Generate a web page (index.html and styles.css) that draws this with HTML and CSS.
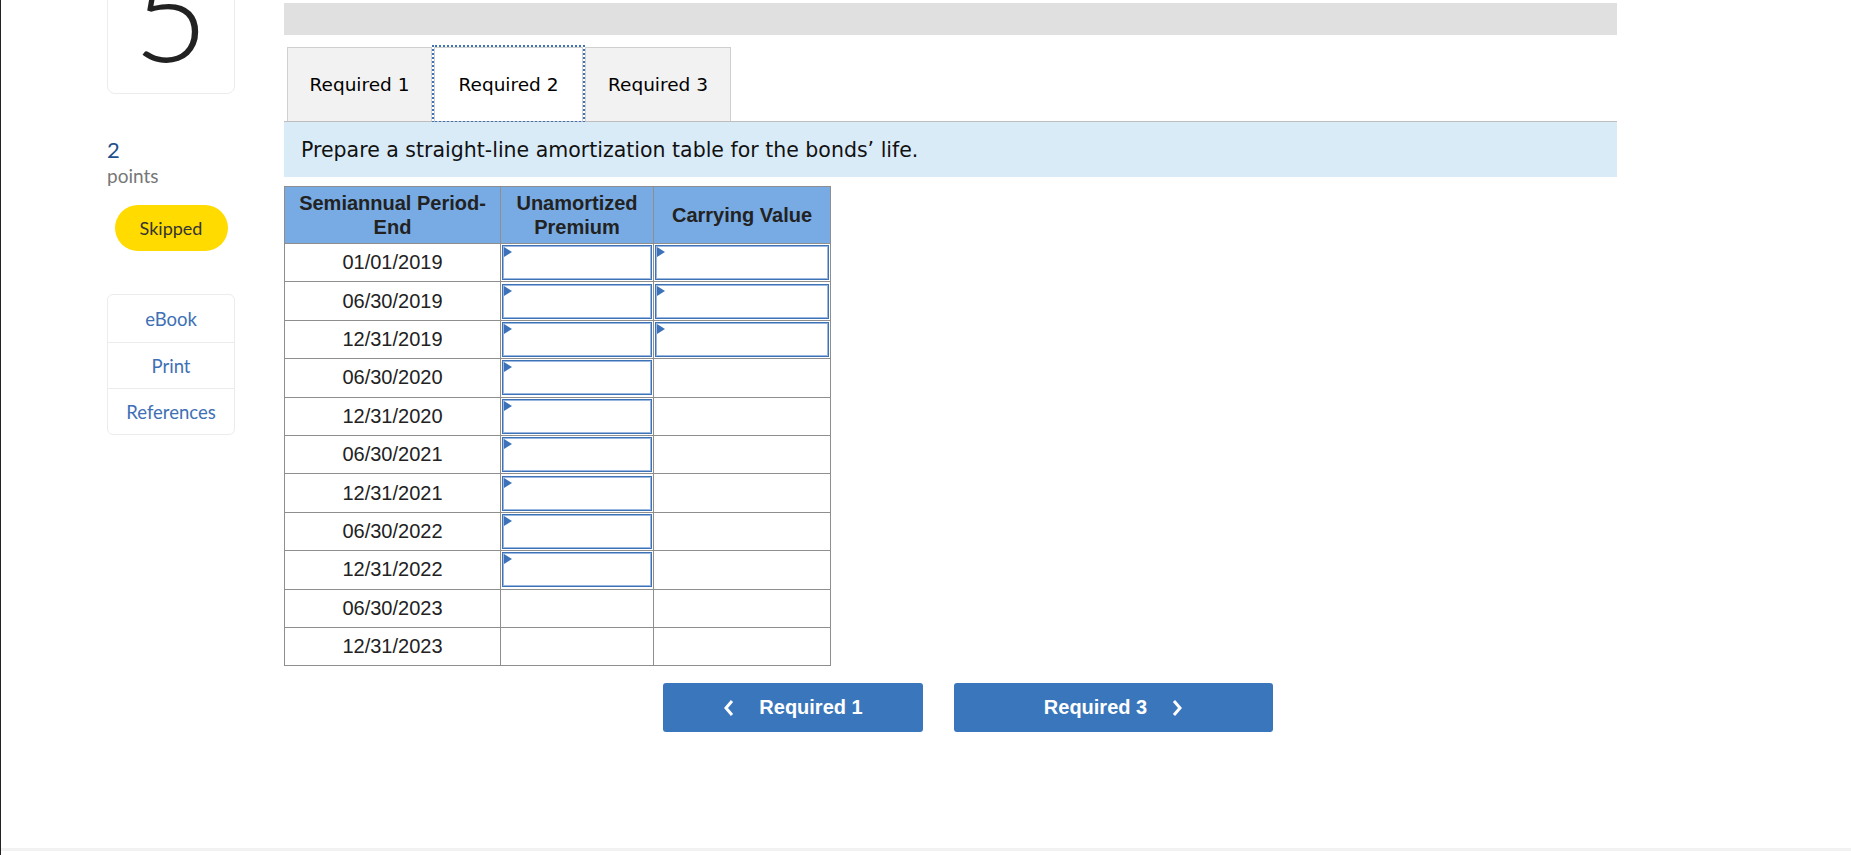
FILE: index.html
```html
<!DOCTYPE html>
<html lang="en">
<head>
    <meta charset="UTF-8">
    <meta name="viewport" content="width=device-width, initial-scale=1.0">
    <title>Question 5 - Required 2</title>
    <link rel="stylesheet" href="styles.css">
</head>
<body>
    <div class="frame">
        <div class="layout">
            <!-- Question sidebar -->
            <aside class="side">
                <div class="qnum">5</div>
                <div class="score">
                    <span class="score-num">2</span>
                    <span class="score-label">points</span>
                </div>
                <span class="status">Skipped</span>
                <ul class="tools">
                    <li><a href="#">eBook</a></li>
                    <li><a href="#">Print</a></li>
                    <li><a href="#">References</a></li>
                </ul>
            </aside>

            <!-- Question body -->
            <main class="main">
                <div class="topbar"></div>

                <div class="tabs">
                    <button class="tab">Required 1</button>
                    <button class="tab active">Required 2</button>
                    <button class="tab">Required 3</button>
                </div>

                <div class="prompt">Prepare a straight-line amortization table for the bonds’ life.</div>

                <table class="amort">
                    <colgroup>
                        <col class="col-date">
                        <col class="col-prem">
                        <col class="col-carry">
                    </colgroup>
                    <thead>
                        <tr>
                            <th>Semiannual Period-<br>End</th>
                            <th>Unamortized<br>Premium</th>
                            <th>Carrying Value</th>
                        </tr>
                    </thead>
                    <tbody id="rows"></tbody>
                </table>

                <div class="nav">
                    <button class="nav-btn prev">
                        <svg class="chev" width="12" height="18" viewBox="0 0 12 18"><polyline points="9,2 3,9 9,16"/></svg>
                        <span>Required 1</span>
                    </button>
                    <button class="nav-btn next">
                        <span>Required 3</span>
                        <svg class="chev" width="12" height="18" viewBox="0 0 12 18"><polyline points="3,2 9,9 3,16"/></svg>
                    </button>
                </div>
            </main>
        </div>
        <footer class="foot"></footer>
    </div>

    <script>
        // Period ends, and which columns take an answer
        const periods = [
            { date: '01/01/2019', prem: true,  carry: true },
            { date: '06/30/2019', prem: true,  carry: true },
            { date: '12/31/2019', prem: true,  carry: true },
            { date: '06/30/2020', prem: true,  carry: false },
            { date: '12/31/2020', prem: true,  carry: false },
            { date: '06/30/2021', prem: true,  carry: false },
            { date: '12/31/2021', prem: true,  carry: false },
            { date: '06/30/2022', prem: true,  carry: false },
            { date: '12/31/2022', prem: true,  carry: false },
            { date: '06/30/2023', prem: false, carry: false },
            { date: '12/31/2023', prem: false, carry: false }
        ];

        const rowsElement = document.getElementById('rows');

        function answerCell(hasInput) {
            const td = document.createElement('td');
            if (hasInput) {
                const wrap = document.createElement('div');
                wrap.className = 'answer';
                const input = document.createElement('input');
                input.type = 'text';
                wrap.appendChild(input);
                td.appendChild(wrap);
            }
            return td;
        }

        periods.forEach(period => {
            const tr = document.createElement('tr');
            const dateCell = document.createElement('td');
            dateCell.className = 'date';
            dateCell.textContent = period.date;
            tr.appendChild(dateCell);
            tr.appendChild(answerCell(period.prem));
            tr.appendChild(answerCell(period.carry));
            rowsElement.appendChild(tr);
        });
    </script>
</body>
</html>
```

FILE: styles.css
```css
/* Page frame */
body {
    margin: 0;
    background-color: #fff;
    overflow: hidden;
}

.frame {
    border-left: 1px solid #222;
    height: 855px;
    box-sizing: border-box;
}

.layout {
    display: flex;
    gap: 49px;
    padding-left: 106px;
    height: 848px;
}

/* Sidebar */
.side {
    width: 128px;
    display: flex;
    flex-direction: column;
    font-family: Lato, "Open Sans", sans-serif;
}

.qnum {
    margin-top: -60px;
    height: 154px;
    box-sizing: border-box;
    border: 1px solid #ececec;
    border-radius: 8px;
    display: flex;
    justify-content: center;
    align-items: flex-end;
    font-size: 130px;
    font-weight: 300;
    line-height: 130px;
    color: #222;
    padding-bottom: 16px;
    overflow: hidden;
}

.score {
    display: flex;
    flex-direction: column;
    margin-top: 43px;
}

.score-num {
    font-size: 22px;
    line-height: 26px;
    color: #1f4f8c;
}

.score-label {
    font-size: 19px;
    line-height: 24px;
    margin-top: 1px;
    color: #777;
}

.status {
    align-self: center;
    margin-top: 17px;
    width: 113px;
    height: 46px;
    border-radius: 23px;
    background-color: #ffdb00;
    color: #333;
    font-size: 18px;
    display: flex;
    justify-content: center;
    align-items: center;
}

.tools {
    list-style: none;
    margin: 43px 0 0;
    padding: 0;
    border: 1px solid #ececec;
    border-radius: 6px;
}

.tools li {
    height: 45px;
    display: flex;
    justify-content: center;
    align-items: center;
    border-top: 1px solid #ececec;
}

.tools li:first-child {
    height: 47px;
    border-top: none;
}

.tools a {
    color: #3e70b5;
    font-size: 18.5px;
    text-decoration: none;
}

/* Main column */
.main {
    width: 1333px;
    display: flex;
    flex-direction: column;
}

.topbar {
    height: 32px;
    margin-top: 3px;
    background-color: #e0e0e0;
}

.tabs {
    display: flex;
    gap: 2px;
    margin-top: 12px;
    padding-left: 3px;
    border-bottom: 1px solid #bdbdbd;
}

.tab {
    width: 145px;
    height: 74px;
    border: 1px solid #cfcfcf;
    border-bottom: none;
    background-color: #f2f2f2;
    font-family: "DejaVu Sans", Verdana, sans-serif;
    font-size: 18.5px;
    color: #000;
    padding: 0;
    cursor: pointer;
}

.tab.active {
    width: 149px;
    background-color: #fff;
    outline: 2px dotted #3d72b8;
    outline-offset: 0;
}

.tab:last-child {
    width: 146px;
}

.prompt {
    height: 55px;
    background-color: #daebf8;
    padding-left: 17px;
    display: flex;
    align-items: center;
    font-family: "DejaVu Sans", Verdana, sans-serif;
    font-size: 20.5px;
    color: #111;
}

/* Amortization table */
.amort {
    margin-top: 9px;
    border-collapse: collapse;
    table-layout: fixed;
    width: 546px;
    font-family: "Liberation Sans", Arial, sans-serif;
    font-size: 20px;
    color: #222;
    border: 1px solid #a0a0a0;
}

.col-date { width: 216px; }
.col-prem { width: 153px; }
.col-carry { width: 177px; }

.amort th {
    background-color: #78abe3;
    font-weight: bold;
    line-height: 24px;
    height: 56px;
    padding: 0 2px;
    border: 1px solid #8e8e8e;
    color: #222;
}

.amort td {
    height: 37.4px;
    padding: 0;
    border: 1px solid #8e8e8e;
    text-align: center;
}

.answer {
    position: relative;
    margin: 0 1px;
    height: 35px;
}

/* Blue marker in the corner of each answer box */
.answer::before {
    content: "";
    position: absolute;
    left: 2px;
    top: 2px;
    border-left: 8px solid #3d72b8;
    border-top: 5px solid transparent;
    border-bottom: 5px solid transparent;
}

.answer input {
    width: 100%;
    height: 100%;
    box-sizing: border-box;
    border: 1px solid #3e72b6;
    box-shadow: inset 0 0 0 1px #9ab7df;
    padding: 0 6px;
    font-family: "Liberation Sans", Arial, sans-serif;
    font-size: 18px;
}

/* Previous / next buttons */
.nav {
    display: flex;
    gap: 31px;
    margin-top: 17px;
    padding-left: 379px;
}

.nav-btn {
    height: 49px;
    border: none;
    border-radius: 3px;
    background-color: #3a76bb;
    color: #fff;
    font-family: "Liberation Sans", Arial, sans-serif;
    font-size: 20px;
    font-weight: bold;
    display: flex;
    justify-content: center;
    align-items: center;
    gap: 24px;
    cursor: pointer;
}

.nav-btn.prev { width: 260px; }
.nav-btn.next { width: 319px; }

.chev polyline {
    fill: none;
    stroke: #fff;
    stroke-width: 3;
}

.foot {
    border-top: 3px solid #f2f2f2;
}
```
